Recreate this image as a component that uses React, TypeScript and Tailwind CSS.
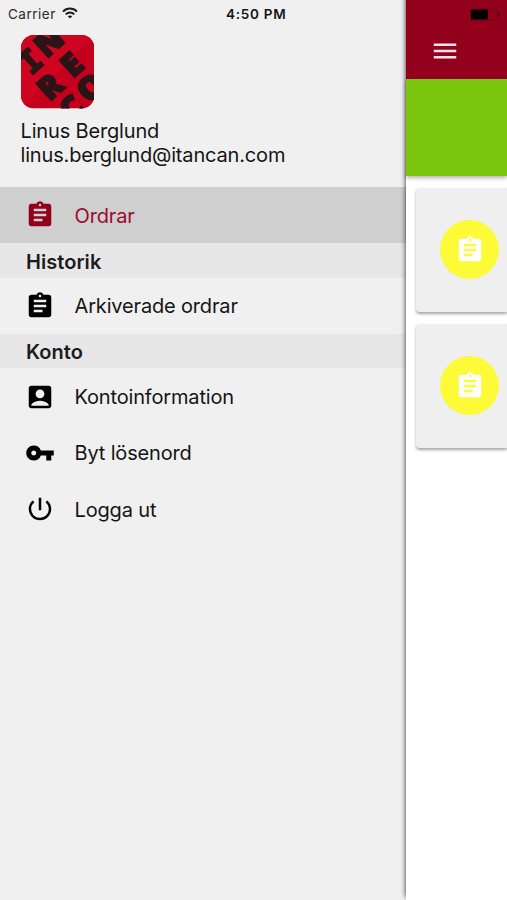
import type { ReactNode } from 'react';
import { MdAccountBox, MdAssignment, MdMenu, MdPowerSettingsNew, MdVpnKey } from 'react-icons/md';

function AppLogo() {
  return (
    <svg viewBox="0 0 74 74" className="block h-[73.5px] w-[73.5px]">
      <defs>
        <clipPath id="tile">
          <rect width="74" height="74" rx="13" />
        </clipPath>
      </defs>
      <g clipPath="url(#tile)">
        <rect width="74" height="74" fill="#c4001c" />
        <path d="M0 0H74L0 74Z" fill="#d00420" />
        <g
          fill="#2b1417"
          stroke="#2b1417"
          strokeWidth="1.8"
          fontFamily="'Open Sans', sans-serif"
          fontWeight="800"
          fontSize="32"
          textAnchor="middle"
        >
          <text transform="translate(9 26) rotate(-42)" y="12" fontFamily="'DejaVu Sans Mono', monospace" fontWeight="700">I</text>
          <text transform="translate(28 7) rotate(-42)" y="11">N</text>
          <text transform="translate(29 52) rotate(-42)" y="11">R</text>
          <text transform="translate(51 30) rotate(-42)" y="11">E</text>
          <text transform="translate(51 74) rotate(-42)" y="11">C</text>
          <text transform="translate(70 53) rotate(-42)" y="11">O</text>
        </g>
      </g>
    </svg>
  );
}

function StatusBar() {
  return (
    <div className="flex h-7 items-center gap-[6px] pl-[8px] text-[13.5px] text-[#2b2b2b]">
      <span className="tracking-[0.5px]">Carrier</span>
      <svg viewBox="0 0 16 12" className="mb-[2px] h-[12px] w-[16px]" fill="none" stroke="#1c1c1c" strokeWidth="2">
        <path d="M1 4.6C5 0.6 11 0.6 15 4.6" />
        <path d="M3.7 7.4C6.2 5 9.8 5 12.3 7.4" />
        <path d="M8 11.6L5.7 9.3C7 8.1 9 8.1 10.3 9.3Z" fill="#1c1c1c" stroke="none" />
      </svg>
    </div>
  );
}

interface MenuItemProps {
  icon: ReactNode;
  label: string;
  active?: boolean;
}

function MenuItem({ icon, label, active }: MenuItemProps) {
  return (
    <div
      className={`flex h-[56.3px] items-center pl-[25px] text-[20px] tracking-[-0.16px] ${
        active ? 'bg-[#cfcfcf] text-[#9c0a30]' : 'text-[#151515]'
      }`}
    >
      <span className={active ? 'text-[#92001c]' : 'text-black'}>{icon}</span>
      <span className="ml-[19.5px] pt-px">{label}</span>
    </div>
  );
}

function SectionHeader({ title }: { title: string }) {
  return (
    <div className="flex h-[34.3px] items-center bg-[#e7e7e7] pl-[26px] pt-[2px] text-[20px] font-semibold tracking-[0.05px] text-[#1c1c1c]">
      {title}
    </div>
  );
}

function OrderCard() {
  return (
    <div className="flex h-[124px] items-center rounded-l-[4px] bg-[#efefef] pl-6 shadow-[0_2px_3px_rgba(0,0,0,0.35)]">
      <div className="flex h-[59px] w-[59px] items-center justify-center rounded-full bg-[#fdfa37]">
        <MdAssignment size={30} className="text-white" />
      </div>
    </div>
  );
}

export default function App() {
  return (
    <div className="relative flex h-[900px] w-[507px] overflow-hidden bg-[#f0f0f0] font-['Inter',sans-serif]">
      <aside className="w-[405.5px] shrink-0">
        <StatusBar />
        <div className="h-[159.2px] pl-[20.5px] pt-[7px]">
          <AppLogo />
          <div className="mt-[10px] text-[20px] leading-[24.5px] tracking-[-0.16px] text-[#151515]">
            <p>Linus Berglund</p>
            <p>linus.berglund@itancan.com</p>
          </div>
        </div>
        <nav>
          <MenuItem icon={<MdAssignment size={30} />} label="Ordrar" active />
          <SectionHeader title="Historik" />
          <MenuItem icon={<MdAssignment size={30} />} label="Arkiverade ordrar" />
          <SectionHeader title="Konto" />
          <MenuItem icon={<MdAccountBox size={30} />} label="Kontoinformation" />
          <MenuItem icon={<MdVpnKey size={30} />} label="Byt lösenord" />
          <MenuItem icon={<MdPowerSettingsNew size={30} />} label="Logga ut" />
        </nav>
      </aside>

      <main className="relative z-10 flex w-[101.5px] shrink-0 flex-col bg-white shadow-[0_-3px_5px_rgba(0,0,0,0.85)]">
        <header className="h-[79px] bg-[#92001c]">
          <div className="flex h-7 items-center justify-end pr-[7px]">
            <svg viewBox="0 0 30 13" className="h-[13px] w-[30px]">
              <rect x="0.5" y="1" width="26.5" height="11" rx="2" fill="none" stroke="#74000f" />
              <rect x="1" y="1.5" width="17" height="10" rx="1" fill="#000" />
              <path d="M28 4.5C30 5.2 30 7.8 28 8.5Z" fill="#2b0008" />
            </svg>
          </div>
          <div className="flex h-[46px] items-center pl-6">
            <MdMenu size={30} className="text-[#ffe3ea]" />
          </div>
        </header>
        <div className="h-[97px] bg-[#7bc50e] shadow-[0_2px_4px_rgba(0,0,0,0.3)]" />
        <div className="flex flex-col gap-3 pl-[10.5px] pt-[11.5px]">
          <OrderCard />
          <OrderCard />
        </div>
      </main>

      {/* the clock is centered over both panels */}
      <div className="absolute left-[226px] top-0 flex h-7 items-center text-[13.5px] font-semibold tracking-[0.75px] text-[#151515]">
        4:50 PM
      </div>
    </div>
  );
}
